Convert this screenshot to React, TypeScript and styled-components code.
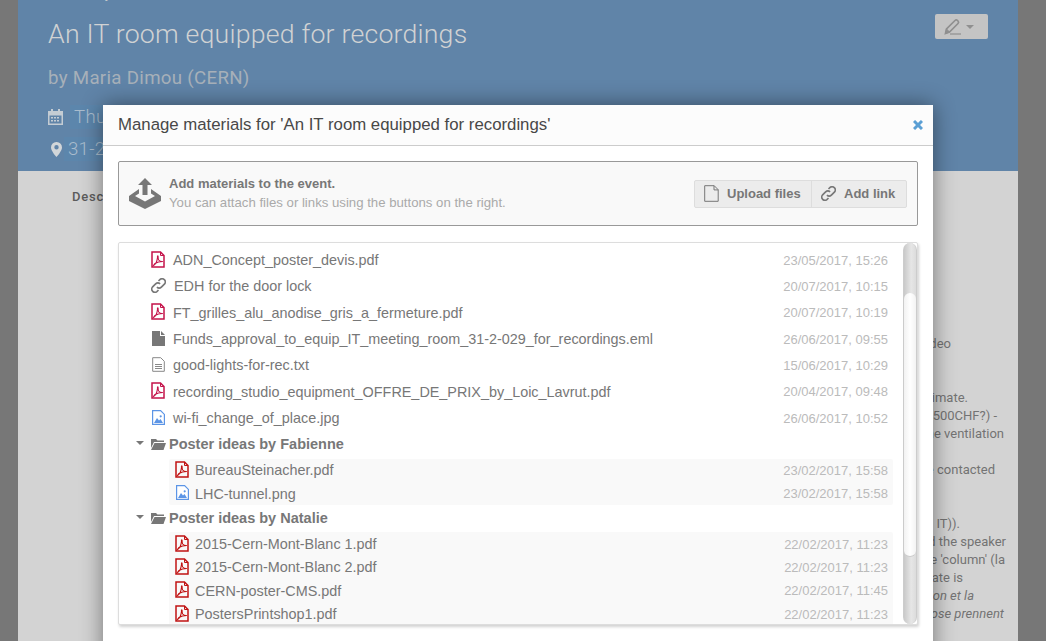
import styled, { createGlobalStyle } from 'styled-components'

const SANS = '"Liberation Sans", Arial, sans-serif'

const Global = createGlobalStyle`
  html, body {
    margin: 0;
    height: 100%;
    overflow: hidden;
    background: #777;
  }
`

const Page = styled.div`
  position: relative;
  height: 641px;
  overflow: hidden;
  padding: 0 28px 0 18px;
  background: #777;
  font-family: Roboto, sans-serif;
`

const Sheet = styled.div`
  display: flex;
  flex-direction: column;
  height: 641px;
  background: #d3d3d3;
`

const Hero = styled.header`
  display: flex;
  flex: 0 0 171px;
  justify-content: space-between;
  padding: 0 30px;
  overflow: hidden;
  background: #6084a8;
`

const HeroInfo = styled.div`
  display: flex;
  flex-direction: column;
`

const Category = styled.div`
  height: 16px;
  margin-top: -15px;
  font-size: 14px;
  line-height: 16px;
  color: #c4c9cd;
`

const Title = styled.h1`
  margin: 15px 0 0;
  font-size: 26.7px;
  font-weight: 300;
  line-height: 36px;
  letter-spacing: 0.2px;
  color: #d0d2d3;
`

const Speaker = styled.div`
  margin-top: 14px;
  font-size: 18.7px;
  line-height: 24px;
  letter-spacing: 0.3px;
  color: #a7b0b9;
`

const MetaRow = styled.div<{ $top: number; $gap: number; $left?: number }>`
  display: flex;
  align-items: center;
  gap: ${({ $gap }) => $gap}px;
  height: 24px;
  margin-top: ${({ $top }) => $top}px;
  margin-left: ${({ $left }) => $left ?? 0}px;
`

const MetaChip = styled.span`
  width: 72px;
  padding-left: 4px;
  overflow: hidden;
  font-size: 18.6px;
  font-weight: 300;
  line-height: 24px;
  letter-spacing: 0.3px;
  white-space: nowrap;
  color: #a9bccd;
  background: #5c86ac;
`

const EditButton = styled.div`
  display: flex;
  align-items: center;
  justify-content: center;
  gap: 4px;
  width: 53px;
  height: 25px;
  box-sizing: border-box;
  padding-right: 6px;
  margin-top: 14px;
  background: #c4c4c4;
  border-radius: 2px;
`

const Caret = styled.span<{ $color: string }>`
  width: 0;
  height: 0;
  border-top: 4px solid ${({ $color }) => $color};
  border-right: 4px solid transparent;
  border-left: 4px solid transparent;
`

const Description = styled.section`
  flex: 1;
  font-size: 13px;
  line-height: 18px;
  color: #737373;
`

const DescLabel = styled.div`
  height: 164px;
  box-sizing: border-box;
  padding: 17px 0 0 54px;
  font-weight: 500;
  line-height: 18px;
  letter-spacing: 0.8px;
  color: #5c5c5c;
`

const DescLine = styled.div<{ $end: number; $italic?: boolean }>`
  height: 18px;
  margin-right: ${({ $end }) => 1018 - $end}px;
  font-style: ${({ $italic }) => ($italic ? 'italic' : 'normal')};
  text-align: right;
  white-space: nowrap;
`

const Modal = styled.div`
  position: absolute;
  top: 105px;
  left: 103px;
  display: flex;
  flex-direction: column;
  width: 830px;
  height: 560px;
  font-family: ${SANS};
  background: #fff;
  border-radius: 2px 2px 0 0;
  box-shadow: 0 0 22px rgb(0 0 0 / 45%);
`

const ModalHead = styled.div`
  display: flex;
  flex: 0 0 41px;
  align-items: center;
  justify-content: space-between;
  box-sizing: border-box;
  padding: 0 10px 0 15px;
  background: #fcfcfc;
  border-bottom: 1px solid #ccc;
`

const ModalTitle = styled.h2`
  margin: 0 0 1px;
  font-size: 16.8px;
  font-weight: 400;
  color: #484848;
`

const ModalBody = styled.div`
  display: flex;
  flex-direction: column;
  gap: 16px;
  padding: 15px 15px 0;
`

const DropBox = styled.div`
  display: flex;
  align-items: center;
  justify-content: space-between;
  height: 65px;
  box-sizing: border-box;
  padding: 0 10px;
  background: #f9f9f9;
  border: 1px solid #999;
  border-radius: 2px;
`

const DropInfo = styled.div`
  display: flex;
  align-items: center;
  gap: 8px;
`

const DropText = styled.div`
  display: flex;
  flex-direction: column;
  gap: 3px;
  font-size: 13.2px;
  line-height: 16px;
`

const DropTitle = styled.strong`
  font-size: 13px;
  color: #777;
`

const DropHint = styled.span`
  color: #aaa;
`

const ButtonGroup = styled.div`
  display: flex;
  height: 28px;
  box-sizing: border-box;
  background: #ececec;
  border: 1px solid #ddd;
  border-radius: 2px;
`

const GroupButton = styled.div<{ $width: number }>`
  display: flex;
  align-items: center;
  gap: 8px;
  width: ${({ $width }) => $width}px;
  box-sizing: border-box;
  padding-left: 9px;
  font-size: 13px;
  font-weight: 700;
  color: #777;

  & + & {
    border-left: 1px solid #ddd;
  }
`

const ListBox = styled.div`
  display: flex;
  height: 383px;
  box-sizing: border-box;
  overflow: hidden;
  background: #fff;
  border: 1px solid #ddd;
  border-radius: 2px;
  box-shadow: 1px 2px 3px rgb(0 0 0 / 18%);
`

const List = styled.div`
  flex: 1;
  height: 381px;
  padding-top: 4px;
  box-sizing: border-box;
  overflow: hidden;
`

const Row = styled.div<{ $height: number; $indent: number; $right: number }>`
  display: flex;
  align-items: center;
  height: ${({ $height }) => $height}px;
  padding: 0 ${({ $right }) => $right}px 0 ${({ $indent }) => $indent}px;
`

const IconBox = styled.span`
  display: flex;
  flex: 0 0 14px;
  justify-content: center;
  margin-bottom: 2px;
`

const FileName = styled.span<{ $gap: number }>`
  flex: 1;
  margin-left: ${({ $gap }) => $gap}px;
  font-size: 14.4px;
  color: #777;
  white-space: nowrap;
`

const FileDate = styled.span`
  font-size: 13px;
  color: #bbb;
`

const FolderRow = styled.div`
  display: flex;
  align-items: center;
  height: 27.3px;
  box-sizing: border-box;
  padding: 0 5px 1px 17px;
`

const FolderName = styled.span`
  margin-left: 3px;
  font-size: 14.5px;
  font-weight: 700;
  color: #777;
`

const FolderCaret = styled(Caret)`
  margin-right: 7px;
  margin-bottom: 3px;
`

const Group = styled.div`
  margin: 0 10px 0 50px;
  background: #f9f9f9;
  border-radius: 2px;
`

const ScrollTrack = styled.div`
  flex: 0 0 14px;
  box-sizing: border-box;
  background: linear-gradient(90deg, #c9c9c9, #e6e6e6 60%, #dcdcdc);
  border-right: 1px solid #ccc;
  border-left: 1px solid #ccc;
  border-radius: 7px;
`

const ScrollThumb = styled.div`
  height: 263px;
  margin: 50px 0 0;
  background: linear-gradient(90deg, #f2f2f2, #fff 50%, #f3f3f3);
  border-bottom: 1px solid #ccc;
  border-radius: 7px;
`

const PdfIcon = ({ color }: { color: string }) => (
  <svg width="14" height="17" viewBox="0 0 14 17" fill="none">
    <path d="M1 1h8.500L13 4.500V16H1z" stroke={color} strokeWidth="1.500" />
    <path d="M9.500 1v3.500H13" stroke={color} strokeWidth="1" />
    <path
      d="M2.500 14.500c2-1 3.500-4 4-8-.2-1.500.2-2 .5-1.500.3 1-.2 2.500.7 4 1 1.200 2.500 1.700 4 1.500-2 0-5.700.7-7.700 2-.7.700-1.200 1.500-1.500 2z"
      stroke={color}
      strokeWidth="1.100"
    />
  </svg>
)

const LinkIcon = ({ size = 15, color = '#777' }: { size?: number; color?: string }) => (
  <svg width={size} height={size} viewBox="1 1 14 14" fill="none" stroke={color} strokeWidth="1.500">
    <path d="M6.500 9.500a3 3 0 0 0 4.200 0l3-3a3 3 0 0 0-4.200-4.200L8 3.800" />
    <path d="M9.500 6.500a3 3 0 0 0-4.200 0l-3 3a3 3 0 0 0 4.200 4.200L8 12.200" />
  </svg>
)

const SolidFileIcon = () => (
  <svg width="13" height="15" viewBox="0 0 13 15">
    <path d="M0 0h8v5h5v10H0z" fill="#777" />
    <path d="M9 0l4 4H9z" fill="#777" />
  </svg>
)

const TextFileIcon = () => (
  <svg width="13" height="15" viewBox="0 0 13 15" fill="none" stroke="#888">
    <path d="M.7.700h8l3.600 3.600v10H.7z" />
    <path d="M3 7.500h7M3 9.500h7M3 11.500h7" strokeWidth="1" />
  </svg>
)

const ImageIcon = () => (
  <svg width="13" height="15" viewBox="0 0 13 15">
    <path d="M.6.600h8l3.800 3.800v10H.6z" fill="#fff" stroke="#5c95e6" strokeWidth="1.200" />
    <path d="M2 13l3-5 2 2.500 1.500-1.500L11 13z" fill="#5c95e6" />
    <circle cx="8.700" cy="6.300" r="1.100" fill="#5c95e6" />
  </svg>
)

const FolderIcon = () => (
  <svg width="15" height="12" viewBox="0 0 15 12">
    <path d="M0 1h5l1.500 1.500H13V4H3L0 10z" fill="#777" />
    <path d="M3.500 5H15l-2.500 7H0z" fill="#777" />
  </svg>
)

const UploadIcon = () => (
  <svg width="32" height="31" viewBox="0 0 32 31">
    <path d="M16 0l7 7h-4.500v10h-5V7H9z" fill="#777" />
    <path
      d="M10 11L0 18v5l16 8 16-8v-5l-10-7v4.500l4 2.500-10 5.500L6 18l4-2.500z"
      fill="#777"
    />
  </svg>
)

const CalendarIcon = () => (
  <svg width="15" height="16" viewBox="0 0 15 16" fill="#c4ccd3">
    <path d="M0 2h15v14H0zm1.500 4.500V14.500h12V6.500z" fillRule="evenodd" />
    <path d="M3 0h2v3H3zM10 0h2v3h-2z" />
    <path d="M3 8h2v1.500H3zM6 8h2v1.500H6zM9 8h2v1.500H9zM3 11h2v1.500H3zM6 11h2v1.500H6zM9 11h2v1.500H9z" />
  </svg>
)

const PinIcon = () => (
  <svg width="11" height="15" viewBox="0 0 11 15">
    <path
      d="M5.500 0A5.400 5.400 0 0 0 0 5.400C0 9 5.500 15 5.500 15S11 9 11 5.400A5.400 5.400 0 0 0 5.500 0zm0 7.500a2.200 2.200 0 1 1 0-4.400 2.200 2.200 0 0 1 0 4.400z"
      fill="#d2d6d9"
      fillRule="evenodd"
    />
  </svg>
)

const PencilIcon = () => (
  <svg width="18" height="17" viewBox="0 0 18 17" fill="none" stroke="#8f8f8f">
    <path d="M1.500 15.500l1-4.500L11 2.500a1.800 1.800 0 0 1 2.500 0l.5.500a1.800 1.800 0 0 1 0 2.500L5.500 14z" strokeWidth="1.700" />
    <path d="M1.500 15.500l1-4.500 3 3z" fill="#8f8f8f" />
    <path d="M6 16h11" strokeWidth="1.200" />
  </svg>
)

const BlankFileIcon = () => (
  <svg width="15" height="17" viewBox="0 0 15 17" fill="none" stroke="#777">
    <path d="M.7.700h9.500l4 4v11.600H.7z" />
    <path d="M10 .700v4.200h4.200" />
  </svg>
)

const CloseIcon = () => (
  <svg width="10" height="10" viewBox="0 0 10 10" stroke="#5b9fd4" strokeWidth="3">
    <path d="M1 1l8 8M9 1l-8 8" />
  </svg>
)

type Kind = 'pdf' | 'link' | 'mail' | 'text' | 'image'

const TOP_RED = '#c4134a'
const GROUP_RED = '#c01212'

const icon = (kind: Kind, red: string) => {
  if (kind === 'pdf') return <PdfIcon color={red} />
  if (kind === 'link') return <LinkIcon />
  if (kind === 'mail') return <SolidFileIcon />
  if (kind === 'text') return <TextFileIcon />
  return <ImageIcon />
}

const ROOT_FILES: [Kind, string, string][] = [
  ['pdf', 'ADN_Concept_poster_devis.pdf', '23/05/2017, 15:26'],
  ['link', 'EDH for the door lock', '20/07/2017, 10:15'],
  ['pdf', 'FT_grilles_alu_anodise_gris_a_fermeture.pdf', '20/07/2017, 10:19'],
  ['mail', 'Funds_approval_to_equip_IT_meeting_room_31-2-029_for_recordings.eml', '26/06/2017, 09:55'],
  ['text', 'good-lights-for-rec.txt', '15/06/2017, 10:29'],
  ['pdf', 'recording_studio_equipment_OFFRE_DE_PRIX_by_Loic_Lavrut.pdf', '20/04/2017, 09:48'],
  ['image', 'wi-fi_change_of_place.jpg', '26/06/2017, 10:52'],
]

const FOLDERS: { name: string; files: [Kind, string, string][] }[] = [
  {
    name: 'Poster ideas by Fabienne',
    files: [
      ['pdf', 'BureauSteinacher.pdf', '23/02/2017, 15:58'],
      ['image', 'LHC-tunnel.png', '23/02/2017, 15:58'],
    ],
  },
  {
    name: 'Poster ideas by Natalie',
    files: [
      ['pdf', '2015-Cern-Mont-Blanc 1.pdf', '22/02/2017, 11:23'],
      ['pdf', '2015-Cern-Mont-Blanc 2.pdf', '22/02/2017, 11:23'],
      ['pdf', 'CERN-poster-CMS.pdf', '22/02/2017, 11:45'],
      ['pdf', 'PostersPrintshop1.pdf', '22/02/2017, 11:23'],
    ],
  },
]

const DESC_LINES: { text: string; end: number; italic?: boolean }[] = [
  { text: 'video', end: 951 },
  { text: '', end: 0 },
  { text: '', end: 0 },
  { text: 'estimate.', end: 968 },
  { text: '(500CHF?) -', end: 997 },
  { text: 'the ventilation', end: 1004 },
  { text: '', end: 0 },
  { text: 'be contacted', end: 995 },
  { text: '', end: 0 },
  { text: '', end: 0 },
  { text: 'IT)).', end: 960 },
  { text: 'and the speaker', end: 1006 },
  { text: "the 'column' (la", end: 1005 },
  { text: 'The rate is', end: 963 },
  { text: 'position et la', end: 974, italic: true },
  { text: 'chose prennent', end: 1004, italic: true },
]

const App = () => (
  <Page>
    <Global />
    <Sheet>
      <Hero>
        <HeroInfo>
          <Category>AV Library</Category>
          <Title>An IT room equipped for recordings</Title>
          <Speaker>by Maria Dimou (CERN)</Speaker>
          <MetaRow $top={15} $gap={7}>
            <CalendarIcon />
            <MetaChip>Thursday</MetaChip>
          </MetaRow>
          <MetaRow $top={8} $gap={2} $left={3}>
            <PinIcon />
            <MetaChip>31-2-029</MetaChip>
          </MetaRow>
        </HeroInfo>
        <EditButton>
          <PencilIcon />
          <Caret $color="#8f8f8f" />
        </EditButton>
      </Hero>
      <Description>
        <DescLabel>Description</DescLabel>
        {DESC_LINES.map((line, i) => (
          <DescLine key={i} $end={line.end} $italic={line.italic}>
            {line.text}
          </DescLine>
        ))}
      </Description>
    </Sheet>

    <Modal>
      <ModalHead>
        <ModalTitle>Manage materials for 'An IT room equipped for recordings'</ModalTitle>
        <CloseIcon />
      </ModalHead>
      <ModalBody>
        <DropBox>
          <DropInfo>
            <UploadIcon />
            <DropText>
              <DropTitle>Add materials to the event.</DropTitle>
              <DropHint>You can attach files or links using the buttons on the right.</DropHint>
            </DropText>
          </DropInfo>
          <ButtonGroup>
            <GroupButton $width={116}>
              <BlankFileIcon />
              Upload files
            </GroupButton>
            <GroupButton $width={95}>
              <LinkIcon size={15} />
              Add link
            </GroupButton>
          </ButtonGroup>
        </DropBox>
        <ListBox>
          <List>
            {ROOT_FILES.map(([kind, name, date]) => (
              <Row key={name} $height={26.33} $indent={32} $right={15}>
                <IconBox>{icon(kind, TOP_RED)}</IconBox>
                <FileName $gap={8}>{name}</FileName>
                <FileDate>{date}</FileDate>
              </Row>
            ))}
            {FOLDERS.map((folder) => (
              <div key={folder.name}>
                <FolderRow>
                  <FolderCaret $color="#777" />
                  <FolderIcon />
                  <FolderName>{folder.name}</FolderName>
                </FolderRow>
                <Group>
                  {folder.files.map(([kind, name, date]) => (
                    <Row key={name} $height={23.3} $indent={6} $right={5}>
                      <IconBox>{icon(kind, GROUP_RED)}</IconBox>
                      <FileName $gap={6}>{name}</FileName>
                      <FileDate>{date}</FileDate>
                    </Row>
                  ))}
                </Group>
              </div>
            ))}
          </List>
          <ScrollTrack>
            <ScrollThumb />
          </ScrollTrack>
        </ListBox>
      </ModalBody>
    </Modal>
  </Page>
)

export default App
